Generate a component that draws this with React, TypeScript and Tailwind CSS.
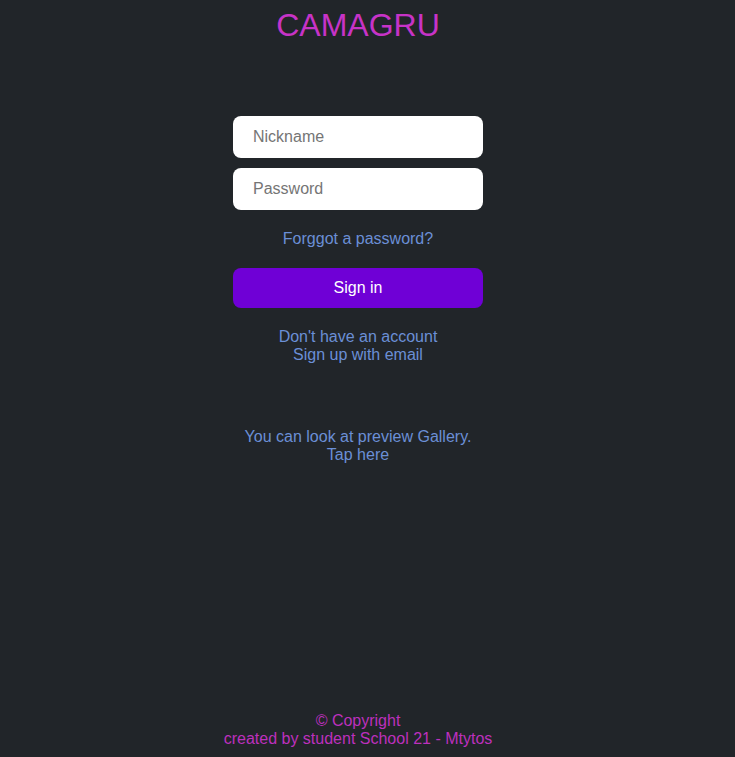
import React, { useState } from "react";

const App: React.FC = () => {
  const [nickname, setNickname] = useState("");
  const [password, setPassword] = useState("");

  return (
    <div className="min-h-screen bg-[#212529] font-['Liberation_Sans',Arial,sans-serif]">
      <div className="w-[716px] min-h-screen flex flex-col items-center">
        <h1 className="mt-[7px] text-[32px] leading-[37px] text-[#c733c7]">CAMAGRU</h1>

        <form
          className="mt-[72px] w-[250px] flex flex-col items-center"
          onSubmit={(e) => e.preventDefault()}
        >
          <input
            type="text"
            value={nickname}
            onChange={(e) => setNickname(e.target.value)}
            placeholder="Nickname"
            className="w-full h-[42px] rounded-lg bg-white px-5 text-base text-[#333] placeholder-[#757575] outline-none"
          />
          <input
            type="password"
            value={password}
            onChange={(e) => setPassword(e.target.value)}
            placeholder="Password"
            className="mt-[10px] w-full h-[42px] rounded-lg bg-white px-5 text-base text-[#333] placeholder-[#757575] outline-none"
          />

          <a href="#" className="mt-5 text-base leading-[18px] text-[#6b8fd6]">
            Forggot a password?
          </a>

          <button
            type="submit"
            className="mt-5 w-full h-[40px] rounded-lg bg-[#6f00d6] text-base text-white"
          >
            Sign in
          </button>

          <a href="#" className="mt-5 text-center text-base leading-[18px] text-[#6b8fd6]">
            Don't have an account
            <br />
            Sign up with email
          </a>
        </form>

        <a href="#" className="mt-16 text-center text-base leading-[18px] text-[#6b8fd6]">
          You can look at preview Gallery.
          <br />
          Tap here
        </a>

        <footer className="mt-auto pb-[9px] text-center text-base leading-[18px] text-[#bd30bd]">
          © Copyright
          <br />
          created by student School 21 - Mtytos
        </footer>
      </div>
    </div>
  );
};

export default App;
